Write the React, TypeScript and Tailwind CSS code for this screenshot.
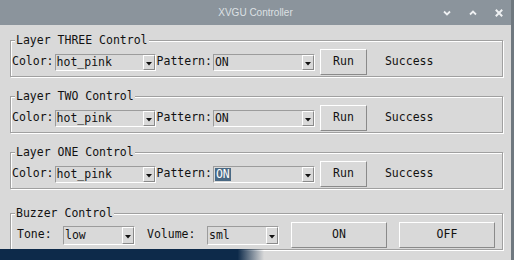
import type { ReactNode } from "react";

const MONO = "font-['DejaVu_Sans_Mono',monospace]";

const Arrow = () => (
	<div className="flex h-full w-[12px] shrink-0 items-center justify-center border-t border-l border-t-white border-l-white border-r border-b border-r-[#8a8a8a] border-b-[#8a8a8a] pt-[3px]">
		<svg width="6" height="4" viewBox="0 0 6 4">
			<path d="M0 0 L6 0 L3 3.5 Z" fill="#111" />
		</svg>
	</div>
);

const Combo = ({
	value,
	width,
	height,
	selected,
}: {
	value: string;
	width: string;
	height: string;
	selected?: boolean;
}) => (
	<div
		className={`flex ${width} ${height} shrink-0 items-center border border-t-[#9c9c9c] border-l-[#9c9c9c] border-r-white border-b-white`}
	>
		<div className="flex-1 pl-px leading-[13px]">
			{selected ? (
				<span className="inline-block bg-[#4a6984] px-px text-white">{value}</span>
			) : (
				value
			)}
		</div>
		<Arrow />
	</div>
);

const Button = ({ label, width }: { label: string; width: string }) => (
	<div
		className={`flex ${width} h-[26px] shrink-0 items-center justify-center border border-t-white border-l-white border-r-[#8a8a8a] border-b-[#8a8a8a]`}
	>
		{label}
	</div>
);

const Frame = ({
	title,
	className,
	children,
}: {
	title: string;
	className?: string;
	children: ReactNode;
}) => (
	<fieldset
		className={`mx-0 border border-[#a0a0a0] px-0 pb-px shadow-[inset_1px_1px_0_#fff,1px_1px_0_#fff] ${className ?? ""}`}
	>
		<legend className="ml-[4px] bg-[#d9d9d9] px-px leading-[14px]">{title}</legend>
		<div className="flex h-[26px] mt-[2px] items-center">{children}</div>
	</fieldset>
);

const LayerFrame = ({
	title,
	selected,
	className,
}: {
	title: string;
	selected?: boolean;
	className?: string;
}) => (
	<Frame title={title} className={className}>
		<span className="px-px">Color:</span>
		<Combo value="hot_pink" width="w-[101px]" height="h-[17px]" />
		<span className="px-px">Pattern:</span>
		<Combo value="ON" width="w-[102px]" height="h-[17px]" selected={selected} />
		<div className="ml-[5px]">
			<Button label="Run" width="w-[47px]" />
		</div>
		<span className="ml-[18px]">Success</span>
	</Frame>
);

export default function App() {
	return (
		<div className="relative flex h-[260px] w-[514px] overflow-hidden bg-[#d9d9d9]">
			<div className="flex flex-1 flex-col">
				<div className="grid h-[25px] grid-cols-[1fr_auto_1fr] items-center bg-[#8b949c]">
					<div />
					<span className="font-['Liberation_Sans',sans-serif] text-[10px] text-[#dde1e4]">
						XVGU Controller
					</span>
					<div className="flex items-center justify-end gap-[18px] pr-[8px]">
						<svg width="8" height="8" viewBox="0 0 8 8">
							<path d="M1 2.5 L4 5.5 L7 2.5" stroke="#eef0f2" strokeWidth="1.8" fill="none" />
						</svg>
						<svg width="8" height="8" viewBox="0 0 8 8">
							<path d="M1 5.5 L4 2.5 L7 5.5" stroke="#eef0f2" strokeWidth="1.8" fill="none" />
						</svg>
						<svg width="8" height="8" viewBox="0 0 8 8">
							<path d="M0.8 0.8 L7.2 7.2 M7.2 0.8 L0.8 7.2" stroke="#eef0f2" strokeWidth="2" fill="none" />
						</svg>
					</div>
				</div>

				<div className={`flex flex-col pl-[10px] pr-[8px] pt-[8px] text-[11.5px] text-[#111] ${MONO}`}>
					<LayerFrame title="Layer THREE Control" />
					<LayerFrame title="Layer TWO Control" className="mt-[12px]" />
					<LayerFrame title="Layer ONE Control" className="mt-[12px]" selected />

					<Frame title="Buzzer Control" className="mt-[17px]">
						<div className="flex items-center gap-3 pl-[6px]">
							<span className="w-[34px]">Tone:</span>
							<Combo value="low" width="w-[72px]" height="h-[19px]" />
							<span className="w-[48px]">Volume:</span>
							<Combo value="sml" width="w-[72px]" height="h-[19px]" />
							<Button label="ON" width="w-[96px]" />
							<Button label="OFF" width="w-[96px]" />
						</div>
					</Frame>
				</div>
			</div>
			<div className="w-[3px] bg-[#6f787f]" />

			<div className="absolute bottom-0 left-0 h-[11px] w-[264px] bg-gradient-to-r from-[#0d2a4a] via-[#0d2a4a] via-90% to-transparent" />
		</div>
	);
}
